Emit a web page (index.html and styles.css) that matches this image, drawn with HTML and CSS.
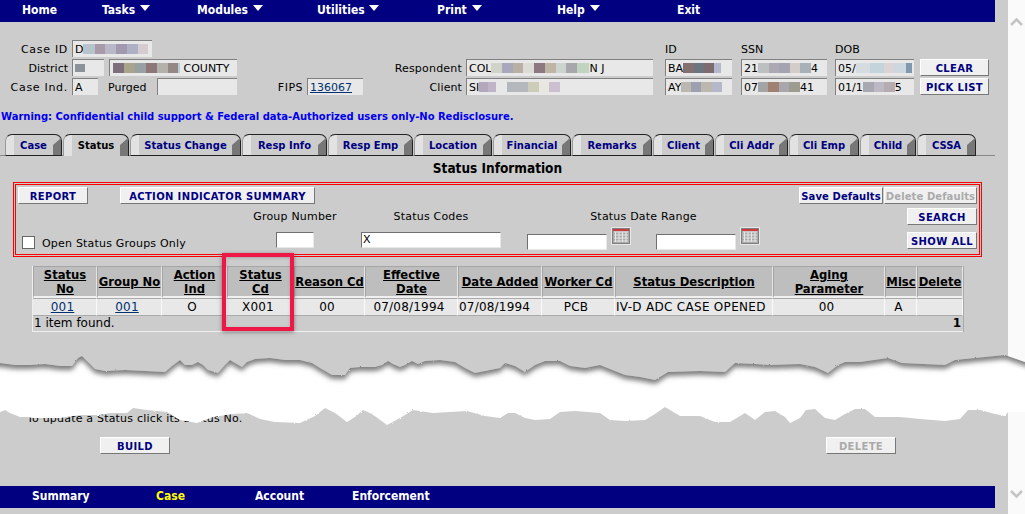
FILE: index.html
```html
<!DOCTYPE html>
<html lang="en">
<head>
    <meta charset="UTF-8">
    <meta name="viewport" content="width=device-width, initial-scale=1.0">
    <title>Status Information</title>
    <link rel="stylesheet" href="styles.css">
</head>
<body>
    <svg class="defs" width="0" height="0">
        <symbol id="cal" viewBox="0 0 20 18">
            <rect x="0" y="0" width="20" height="18" fill="#e8e8e8"/>
            <rect x="1" y="1" width="18" height="16" fill="#808080"/>
            <rect x="2" y="2" width="16" height="2" fill="#cc3b3b"/>
            <path d="M2 4h16v12H2z" fill="#aaa"/>
            <path d="M3 5h14M3 8h14M3 11h14M3 14h14M4.500 5v10M8 5v10M11.500 5v10M15 5v10" stroke="#e6e6e6" fill="none"/>
        </symbol>
    </svg>

    <div class="page">
        <main class="main">
            <nav class="topbar">
                <a class="nav-home">Home</a>
                <a class="nav-tasks">Tasks <i class="caret"></i></a>
                <a class="nav-modules">Modules <i class="caret"></i></a>
                <a class="nav-item">Utilities <i class="caret"></i></a>
                <a class="nav-item">Print <i class="caret"></i></a>
                <a class="nav-item">Help <i class="caret"></i></a>
                <a>Exit</a>
            </nav>

            <section class="case-head">
                <div class="head-row">
                    <label class="lbl wide">Case ID</label>
                    <div class="field w80">D<span class="smear s-case"></span></div>
                    <span class="col-id">ID</span>
                    <span class="col-ssn">SSN</span>
                    <span class="col-dob">DOB</span>
                </div>
                <div class="head-row">
                    <label class="lbl">District</label>
                    <div class="field w32"><span class="smear s-dist"></span></div>
                    <div class="field w128 ml5"><span class="smear s-county"></span>&nbsp;COUNTY</div>
                    <label class="lbl lbl-resp">Respondent</label>
                    <div class="field w187">COL<span class="smear s-resp"></span>N J</div>
                    <div class="field w67 ml12">BA<span class="smear s-id1"></span></div>
                    <div class="field w86 ml9">21<span class="smear s-ssn1"></span>4</div>
                    <div class="field w79 ml8">05/<span class="smear s-dob1"></span></div>
                    <button class="btn w69 ml6">CLEAR</button>
                </div>
                <div class="head-row">
                    <label class="lbl wide">Case Ind.</label>
                    <div class="field w26">A</div>
                    <span class="lbl-purged">Purged</span>
                    <div class="field w80"></div>
                    <label class="lbl lbl-fips">FIPS</label>
                    <div class="field w56"><a class="link">136067</a></div>
                    <label class="lbl lbl-client">Client</label>
                    <div class="field w187">SI<span class="smear s-client"></span></div>
                    <div class="field w67 ml12">AY<span class="smear s-id2"></span></div>
                    <div class="field w86 ml9">07<span class="smear s-ssn2"></span>41</div>
                    <div class="field w79 ml8">01/1<span class="smear s-dob2"></span>5</div>
                    <button class="btn w69 ml6">PICK LIST</button>
                </div>
            </section>

            <p class="warning">Warning: Confidential child support &amp; Federal data-Authorized users only-No Redisclosure.</p>

            <div class="tabs">
                <a class="tab t57">Case</a>
                <a class="tab tab-on t66">Status</a>
                <a class="tab t111">Status Change</a>
                <a class="tab t85">Resp Info</a>
                <a class="tab t85">Resp Emp</a>
                <a class="tab t78">Location</a>
                <a class="tab t78">Financial</a>
                <a class="tab t80">Remarks</a>
                <a class="tab t61">Client</a>
                <a class="tab t73">Cli Addr</a>
                <a class="tab t70">Cli Emp</a>
                <a class="tab t56">Child</a>
                <a class="tab t59">CSSA</a>
            </div>

            <h1 class="title">Status Information</h1>

            <section class="filters">
                <div class="filter-top">
                    <button class="btn w70">REPORT</button>
                    <button class="btn w195 ml32">ACTION INDICATOR SUMMARY</button>
                    <button class="btn w84 push tight">Save Defaults</button>
                    <button class="btn w93 ml1 off tight">Delete Defaults</button>
                </div>
                <div class="filter-grid">
                    <span></span>
                    <span class="ctr cap">Group Number</span>
                    <span class="ctr cap pad15">Status Codes</span>
                    <span class="ctr cap pad26">Status Date Range</span>
                    <button class="btn w70 end">SEARCH</button>

                    <label class="check-wrap"><i class="check"></i>Open Status Groups Only</label>
                    <div class="ctr"><div class="input w38"></div></div>
                    <div class="pad15"><div class="input w140">X</div></div>
                    <div class="dates pad26">
                        <div class="input w80"></div>
                        <svg class="cal"><use href="#cal"/></svg>
                        <div class="input w80 ml25"></div>
                        <svg class="cal"><use href="#cal"/></svg>
                    </div>
                    <button class="btn w70 end showall">SHOW ALL</button>
                </div>
            </section>

            <div class="results">
                <table class="grid">
                    <colgroup>
                        <col class="c64"><col class="c65"><col class="c65"><col class="c67"><col class="c71"><col class="c93">
                        <col class="c84"><col class="c73"><col class="c158"><col class="c112"><col class="c32"><col class="c46">
                    </colgroup>
                    <thead>
                        <tr>
                            <th><u>Status<br>No</u></th>
                            <th><u>Group No</u></th>
                            <th><u>Action<br>Ind</u></th>
                            <th><u>Status<br>Cd</u></th>
                            <th><u>Reason Cd</u></th>
                            <th><u>Effective<br>Date</u></th>
                            <th><u>Date Added</u></th>
                            <th><u>Worker Cd</u></th>
                            <th><u>Status Description</u></th>
                            <th><u>Aging<br>Parameter</u></th>
                            <th><u>Misc</u></th>
                            <th><u>Delete</u></th>
                        </tr>
                    </thead>
                    <tbody>
                        <tr>
                            <td><a class="link">001</a></td>
                            <td><a class="link">001</a></td>
                            <td>O</td>
                            <td>X001</td>
                            <td>00</td>
                            <td>07/08/1994</td>
                            <td class="left">07/08/1994</td>
                            <td>PCB</td>
                            <td class="left desc">IV-D ADC CASE OPENED</td>
                            <td>00</td>
                            <td>A</td>
                            <td></td>
                        </tr>
                    </tbody>
                    <tfoot>
                        <tr>
                            <td colspan="11" class="left">1 item found.</td>
                            <td class="pager">1</td>
                        </tr>
                    </tfoot>
                </table>
                <div class="callout"></div>
            </div>

            <p class="hint">To update a Status click its Status No.</p>

            <div class="actions">
                <button class="btn w70">BUILD</button>
                <button class="btn w70 off">DELETE</button>
            </div>

            <nav class="bottombar">
                <a class="b-summary">Summary</a>
                <a class="b-case">Case</a>
                <a class="b-account">Account</a>
                <a>Enforcement</a>
            </nav>
        </main>

        <aside class="scroll">
            <svg width="17" height="12" viewBox="0 0 17 12"><path d="M3 9l5.500-5.500L14 9" fill="none" stroke="#c4c4c4" stroke-width="2.500"/></svg>
            <svg width="17" height="12" viewBox="0 0 17 12"><path d="M3 3l5.500 5.500L14 3" fill="none" stroke="#c4c4c4" stroke-width="2.500"/></svg>
        </aside>

        <!-- torn paper effect across the middle of the shot -->
        <svg class="tear" viewBox="0 340 1025 100" width="1025" height="100">
            <defs>
                <linearGradient id="paper" gradientUnits="userSpaceOnUse" x1="0" y1="0" x2="1025" y2="0">
                    <stop offset="0.9834" stop-color="#ccc"/>
                    <stop offset="0.9834" stop-color="#fafafa"/>
                </linearGradient>
                <filter id="rough" x="-2%" y="-20%" width="104%" height="140%">
                    <feTurbulence type="fractalNoise" baseFrequency="0.35" numOctaves="2" seed="4"/>
                    <feDisplacementMap in="SourceGraphic" scale="2"/>
                </filter>
                <filter id="shade" x="-2%" y="-20%" width="104%" height="160%">
                    <feTurbulence type="fractalNoise" baseFrequency="0.35" numOctaves="2" seed="9" result="n"/>
                    <feDisplacementMap in="SourceGraphic" in2="n" scale="2" result="d"/>
                    <feDropShadow in="d" dx="0" dy="4" stdDeviation="2.600" flood-color="#666" flood-opacity="0.85"/>
                </filter>
            </defs>
            <path filter="url(#rough)" fill="#fff" d="M-5 350H1030V412L1008 412 1005 416 995 414 980 410 968 410 960 419 945 421 920 419 900 417 875 417 865 409 855 409 845 414 835 420 825 418 815 409 806 410 800 418 790 423 785 417 775 411 765 412 755 420 745 413 730 422 715 422 700 416 680 416 665 407 655 414 645 420 625 421 610 420 600 413 575 411 560 412 550 419 535 420 525 418 515 413 508 413 500 418 485 416 467 411 433 413 413 410 400 418 387 425 372 414 363 410 355 417 347 422 335 413 325 408 315 416 300 423 275 422 260 419 247 413 233 414 213 417 197 423 180 420 167 412 147 410 133 408 127 413 110 413 100 415 80 415 67 417 60 418 33 418 27 417 20 417 10 413 5 410-5 414Z"/>
            <path filter="url(#shade)" fill="url(#paper)" d="M-5 335H1030V364L1025 362 1005 355 955 360 945 365 902 363 888 358 860 362 845 362 838 365 828 373 815 367 800 364 770 365 755 364 735 363 725 372 700 371 668 372 655 380 640 377 625 375 610 369 600 365 585 368 570 366 560 361 545 361 535 365 525 372 515 366 505 363 500 368 485 371 475 373 465 368 455 362 440 360 425 361 418 364 412 361 405 365 400 367 393 364 388 361 382 365 375 367 360 367 350 368 345 375 332 375 320 368 312 363 300 360 285 360 270 358 255 359 247 362 242 367 235 363 230 360 225 365 218 373 208 370 203 365 198 362 192 365 185 365 180 360 172 366 165 372 145 371 125 370 105 371 95 369 88 362 82 356 78 358 72 366 60 366 45 364 30 365 15 365 0 363-5 363Z"/>
        </svg>
    </div>
</body>
</html>
```

FILE: styles.css
```css
* {
    box-sizing: border-box;
}
html, body {
    margin: 0;
    height: 514px;
    overflow: hidden;
}
body {
    background-color: #ccc;
    color: #000;
    font-family: "DejaVu Sans", Verdana, sans-serif;
    font-size: 11px;
}
.defs {
    position: absolute;
}
.page {
    display: flex;
    position: relative;
    height: 514px;
}
.main {
    width: 1008px;
}
.scroll {
    width: 17px;
    background: #fafafa;
    display: flex;
    flex-direction: column;
    justify-content: space-between;
    padding: 16px 0 14px;
}

/* top and bottom bars */
.topbar, .bottombar {
    width: 995px;
    height: 22px;
    background: #000080;
    color: #fff;
    font-family: "DejaVu Sans Condensed", "DejaVu Sans", sans-serif;
    font-weight: bold;
    font-size: 12px;
    display: flex;
    align-items: center;
    padding-top: 0;
}
.topbar {
    padding-left: 22px;
    padding-bottom: 3px;
}
.nav-home { width: 80px; }
.nav-tasks { width: 95px; }
.nav-modules { width: 120px; }
.nav-item { width: 120px; }
.caret {
    display: inline-block;
    width: 0;
    height: 0;
    border-left: 5px solid transparent;
    border-right: 5px solid transparent;
    border-top: 6px solid #fff;
    margin-left: 1px;
    vertical-align: 3px;
}
.bottombar {
    margin-top: 32px;
    padding-left: 32px;
    padding-bottom: 3px;
}
.b-summary { width: 124px; }
.b-case { width: 99px; color: #ff0; }
.b-account { width: 97px; }

/* case header */
.case-head {
    margin-top: 18px;
    display: flex;
    flex-direction: column;
    gap: 2px;
}
.head-row {
    display: flex;
    align-items: center;
    height: 17px;
}
.lbl, .col-id, .col-ssn, .col-dob, .lbl-purged {
    padding-top: 2px;
}
.lbl {
    width: 68px;
    margin-right: 4px;
    text-align: right;
    white-space: nowrap;
}
.wide { letter-spacing: 0.7px; }
.lbl-resp { width: 225px; letter-spacing: 0.2px; }
.lbl-fips { width: 66px; letter-spacing: 0.5px; }
.lbl-client { width: 99px; letter-spacing: 0.1px; }
.lbl-purged { width: 49px; margin-left: 10px; }
.col-id { margin-left: 513px; width: 76px; }
.col-ssn { width: 94px; }
.field {
    height: 17px;
    background: #e8e8e8;
    border-top: 1px solid #808080;
    border-left: 1px solid #808080;
    padding-left: 2px;
    line-height: 15px;
    white-space: nowrap;
    overflow: hidden;
    display: flex;
    align-items: center;
}
.input {
    height: 16px;
    background: #fff;
    border-top: 1px solid #707070;
    border-left: 1px solid #707070;
    border-right: 1px solid #e8e8e8;
    border-bottom: 1px solid #e8e8e8;
    line-height: 14px;
    text-align: left;
    padding-left: 1px;
}
.link {
    color: #003070;
    text-decoration: underline;
}
.w26 { width: 26px; }
.w32 { width: 32px; }
.w38 { width: 38px; display: inline-block; vertical-align: top; }
.w56 { width: 56px; }
.w67 { width: 67px; }
.w69 { width: 69px; }
.w70 { width: 70px; }
.w79 { width: 79px; }
.w80 { width: 80px; }
.w84 { width: 84px; }
.w86 { width: 86px; }
.w93 { width: 93px; }
.w128 { width: 128px; }
.w140 { width: 140px; }
.w187 { width: 187px; }
.w195 { width: 195px; }
.ml1 { margin-left: 1px; }
.ml5 { margin-left: 5px; }
.ml6 { margin-left: 6px; }
.ml8 { margin-left: 8px; }
.ml9 { margin-left: 9px; }
.ml12 { margin-left: 12px; }
.ml25 { margin-left: 25px; }
.ml32 { margin-left: 32px; }

/* blurred personal data */
.smear {
    display: inline-block;
    flex: none;
    height: 10px;
}
.s-case { width: 65px; background: linear-gradient(90deg, #b8c4cc 18%, #a89aa8 18% 34%, #b8b8c8 34% 51%, #a099b0 51% 68%, #b0b0c4 68% 84%, #d4ccd0 84%); }
.s-dist { width: 10px; height: 8px; background: #8b9299; }
.s-county { width: 67px; margin-left: 1px; background: linear-gradient(90deg, #7c6e7c 17%, #a8a48c 17% 33%, #98a0a4 33% 50%, #8c7878 50% 65%, #b4b0ac 65% 82%, #948884 82% 97%, #b8ccd8 97%); }
.s-resp { width: 98px; background: linear-gradient(90deg, #d0d4c8 11%, #a8a8bc 11% 22%, #b8b0a4 22% 33%, #dcdcd4 33% 44%, #8c7880 44% 55%, #c0b4a4 55% 66%, #ccd4d0 66% 77%, #a8a8ac 77% 88%, #c0d4c0 88%); }
.s-client { width: 81px; background: linear-gradient(90deg, #b4a8bc 11%, #c0b4c8 11% 21%, #e8e8e8 21% 35%, #b4b8bc 35% 60%, #ccccb8 60% 74%, #e8e8e0 74% 86%, #ccc0d0 86%); }
.s-id1 { width: 38px; background: linear-gradient(90deg, #857070 28%, #6c7480 28% 55%, #7c6c70 55% 82%, #b4b8cc 82%); }
.s-id2 { width: 41px; background: linear-gradient(90deg, #bcb8b0 25%, #9ca0b0 25% 50%, #bcb8b0 50% 75%, #b4b8c8 75%); }
.s-ssn1 { width: 53px; background: linear-gradient(90deg, #bcc0c0 20%, #aca8b4 20% 40%, #a4a4b0 40% 60%, #d4ccc8 60% 80%, #a8b0b8 80%); }
.s-ssn2 { width: 42px; background: linear-gradient(90deg, #a4a4a4 25%, #a08070 25% 50%, #a8a8ac 50% 75%, #9c9c90 75%); }
.s-dob1 { width: 56px; background: linear-gradient(90deg, #d4dce0 25%, #c4d4dc 25% 50%, #dcd4d4 50% 68%, #ccd8e0 68% 90%, #8098b0 90%); }
.s-dob2 { width: 32px; background: linear-gradient(90deg, #a8a8b0 33%, #bcb8c4 33% 66%, #b4acb0 66%); }

/* buttons */
.btn {
    height: 17px;
    padding: 1px 0 0;
    flex: none;
    background: #f0f0f0;
    border: 0;
    border-top: 1px solid #fff;
    border-left: 1px solid #fff;
    border-right: 1px solid #777;
    border-bottom: 1px solid #777;
    color: #000080;
    font-family: "DejaVu Sans", Verdana, sans-serif;
    font-weight: bold;
    font-size: 10px;
    letter-spacing: 0.35px;
    white-space: nowrap;
}
.btn.tight {
    letter-spacing: 0.1px;
}
.btn.off {
    color: #aaa;
}

.warning {
    margin: 16px 0 0 1px;
    height: 12px;
    line-height: 12px;
    font-size: 10px;
    font-weight: bold;
    letter-spacing: -0.02px;
    color: #0000f0;
    white-space: nowrap;
}

/* tab strip */
.tabs {
    width: 995px;
    height: 22px;
    margin-top: 11px;
    padding-left: 5px;
    display: flex;
    gap: 1px;
    border-bottom: 1px solid #888;
}
.tab {
    position: relative;
    height: 22px;
    padding-top: 5px;
    text-align: center;
    font-size: 10px;
    font-weight: bold;
    color: #000080;
    border: 1px solid #222;
    border-left-color: #999;
    border-radius: 7px 7px 0 0;
    background: linear-gradient(90deg, #e2e2e2 8px, #ccc 8px);
    white-space: nowrap;
}
.tab::after {
    content: "";
    position: absolute;
    right: 0;
    top: 3px;
    bottom: 0;
    width: 8px;
    background: #777;
    clip-path: polygon(100% 0, 100% 100%, 0 100%, 0 7px);
}
.tab-on {
    color: #000;
    border-bottom: 0;
}
.t56 { width: 56px; }
.t57 { width: 57px; }
.t59 { width: 59px; }
.t61 { width: 61px; }
.t66 { width: 66px; }
.t70 { width: 70px; }
.t73 { width: 73px; }
.t78 { width: 78px; }
.t80 { width: 80px; }
.t85 { width: 85px; }
.t111 { width: 111px; }

.title {
    width: 995px;
    margin: 3px 0 0;
    height: 18px;
    line-height: 18px;
    text-align: center;
    font-family: "DejaVu Sans Condensed", "DejaVu Sans", sans-serif;
    font-size: 13.500px;
    font-weight: bold;
}

/* filter panel: two thin red lines */
.filters {
    width: 969px;
    height: 75px;
    margin: 5px 0 0 13px;
    padding: 4px 4px 0;
    border: 1px solid #f00;
    box-shadow: inset 0 0 0 1px #ccc, inset 0 0 0 2px #f00;
    letter-spacing: 0.2px;
}
.filter-top {
    display: flex;
}
.push {
    margin-left: auto;
}
.filter-grid {
    display: grid;
    grid-template-columns: 226px 102px 155px 259px 1fr;
    grid-template-rows: 21px 21px;
    margin-top: 4px;
}
.filter-grid > * {
    align-self: center;
}
.filter-grid > .cap {
    align-self: start;
    line-height: 18px;
}
.ctr {
    text-align: center;
}
.pad15 { padding-left: 15px; }
.pad26 { padding-left: 26px; }
.filter-grid > .end {
    justify-self: end;
    align-self: start;
}
.showall {
    margin-top: 3px;
}
.check-wrap {
    display: flex;
    align-items: center;
    padding-left: 4px;
    padding-top: 8px;
}
.check {
    width: 13px;
    height: 13px;
    margin-right: 7px;
    margin-top: -3px;
    background: #fff;
    border: 1px solid #666;
}
.dates {
    display: flex;
    align-items: flex-end;
    margin-top: -2px;
}
.cal {
    width: 20px;
    height: 18px;
    margin: 0 0 5px 4px;
    flex: none;
}

/* results table */
.results {
    position: relative;
    width: 931px;
    margin: 9px 0 0 32px;
}
.grid {
    width: 931px;
    table-layout: fixed;
    border-collapse: separate;
    border-spacing: 0;
    border-right: 1px solid #aaa;
    border-left: 1px solid #eee;
}
.c64 { width: 64px; }
.c65 { width: 65px; }
.c67 { width: 67px; }
.c71 { width: 71px; }
.c93 { width: 93px; }
.c84 { width: 84px; }
.c73 { width: 73px; }
.c158 { width: 158px; }
.c112 { width: 112px; }
.c32 { width: 32px; }
.c46 { width: 46px; }
.grid th {
    height: 32px;
    padding: 1px 0 0;
    background: #bebebe;
    border-top: 1px solid #a6a6a6;
    border-left: 1px solid #a6a6a6;
    border-right: 1px solid #e4e4e4;
    border-bottom: 2px solid #f0f0f0;
    font-size: 11.600px;
    line-height: 14px;
    font-weight: bold;
    white-space: nowrap;
}
.grid tbody td {
    height: 18px;
    padding: 0 4px 0 0;
    background: #e8e8e8;
    border-top: 1px solid #aaa;
    border-right: 1px solid #fafafa;
    border-bottom: 1px solid #aaa;
    font-size: 12px;
    text-align: center;
    white-space: nowrap;
    letter-spacing: 0.2px;
}
.grid .left {
    text-align: left;
    padding-left: 1px;
}
.grid .desc {
    letter-spacing: 0.3px;
}
.grid tfoot td {
    height: 16px;
    padding: 0 0 1px 1px;
    background: #ccc;
    border-bottom: 1px solid #f0f0f0;
    font-size: 12px;
    line-height: 14px;
}
.grid .pager {
    text-align: right;
    padding-right: 2px;
    font-weight: bold;
}
.callout {
    position: absolute;
    left: 190px;
    top: -13px;
    width: 72px;
    height: 78px;
    border: 4px solid #ee1748;
    box-shadow: 0 1px 4px rgba(60, 60, 60, 0.6), inset 0 1px 3px rgba(60, 60, 60, 0.25);
}

.hint {
    margin: 80px 0 0 27px;
    height: 14px;
    line-height: 14px;
    letter-spacing: 0.2px;
}
.actions {
    display: flex;
    justify-content: space-between;
    width: 796px;
    margin: 11px 0 0 100px;
}

.tear {
    position: absolute;
    left: 0;
    top: 340px;
    pointer-events: none;
}
```
